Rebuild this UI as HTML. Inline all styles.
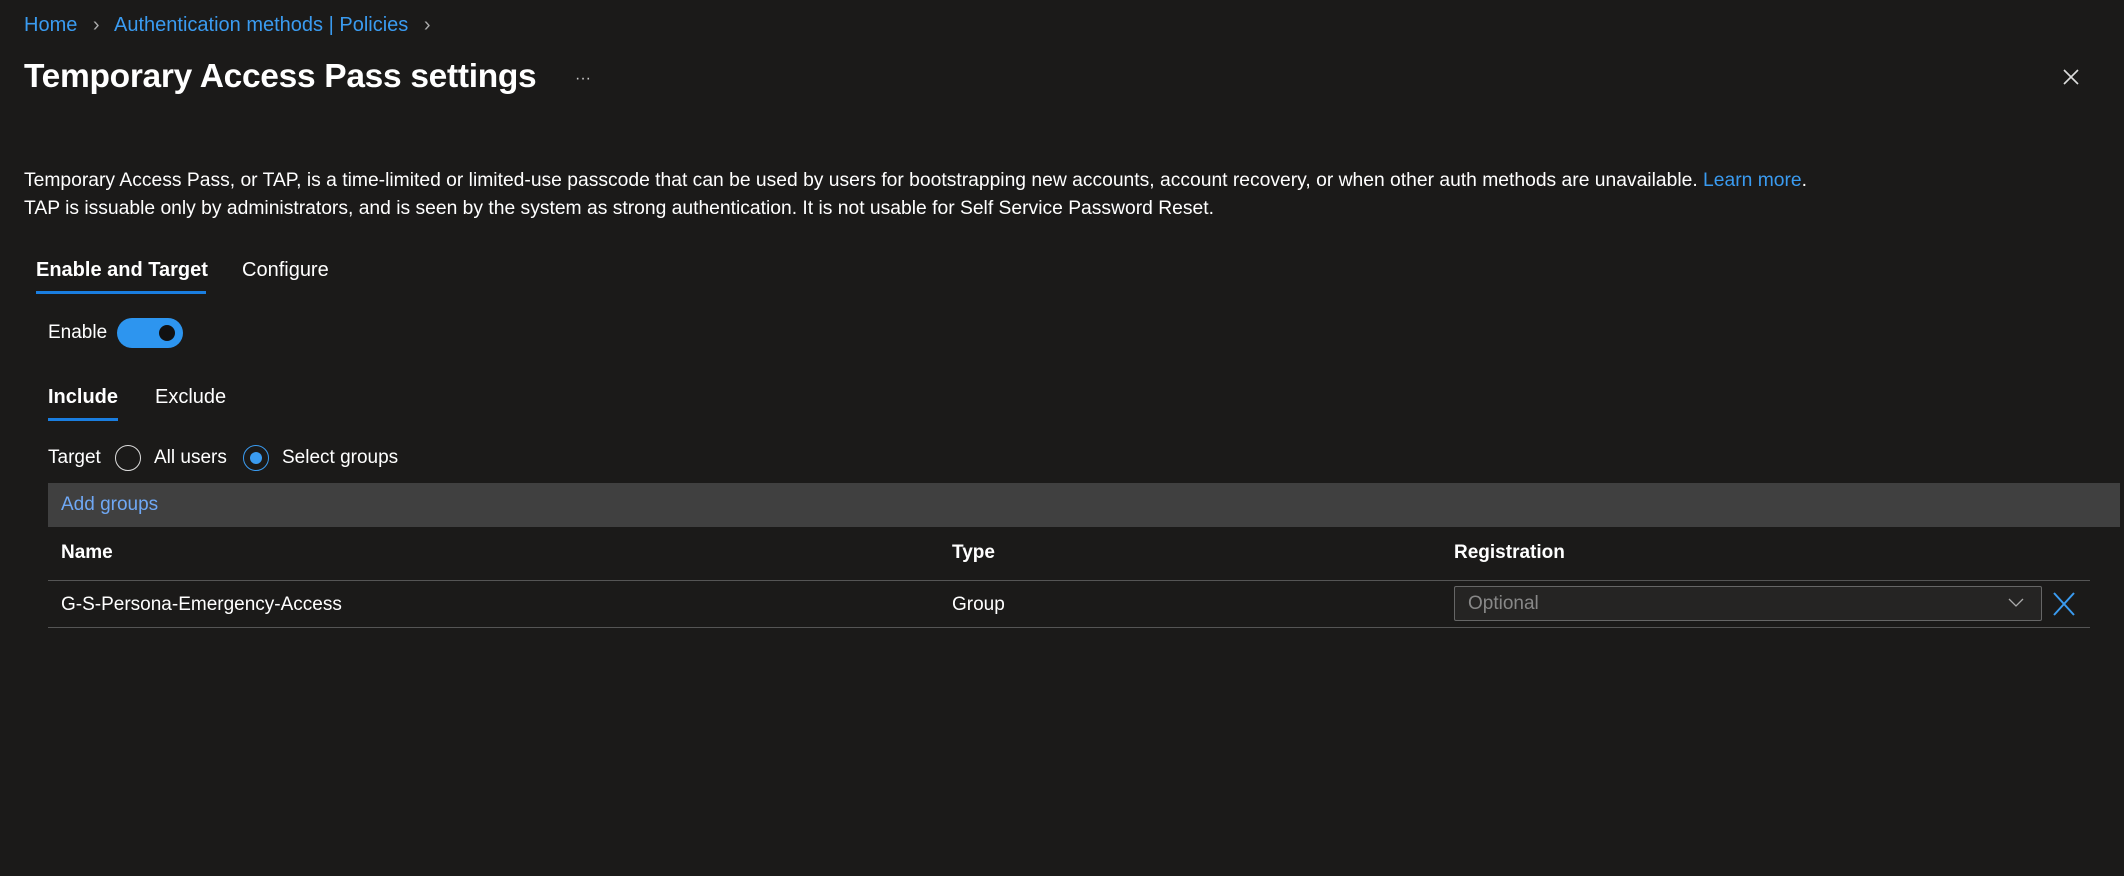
<!DOCTYPE html>
<html><head><meta charset="utf-8"><style>
*{margin:0;padding:0;box-sizing:border-box}
body{width:2124px;height:876px;background:#1b1a19;color:#fff;font-family:"Liberation Sans",sans-serif;position:relative;overflow:hidden;font-size:19px}
.a{position:absolute;white-space:nowrap}
.blue{color:#3a9bf0}
</style></head><body>
<div class="a blue" style="left:24px;top:14px;font-size:20px">Home <span style="color:#aaa;margin:0 10px">&#x203A;</span> Authentication methods | Policies <span style="color:#aaa;margin-left:10px">&#x203A;</span></div>
<div class="a" style="left:24px;top:58px;font-size:33.5px;font-weight:bold;letter-spacing:-0.3px">Temporary Access Pass settings</div>
<div class="a" style="left:575px;top:70px;font-size:16px;color:#ccc">···</div>
<svg class="a" style="left:2063px;top:69px" width="16" height="16"><path d="M1 1L15 15M15 1L1 15" stroke="#ddd" stroke-width="1.6"/></svg>
<div class="a" style="left:24px;top:167px;font-size:19.3px;line-height:28px">Temporary Access Pass, or TAP, is a time-limited or limited-use passcode that can be used by users for bootstrapping new accounts, account recovery, or when other auth methods are unavailable. <span class="blue">Learn more</span>.<br>TAP is issuable only by administrators, and is seen by the system as strong authentication. It is not usable for Self Service Password Reset.</div>
<div class="a" style="left:36px;top:259px;font-size:20px;font-weight:bold">Enable and Target</div>
<div class="a" style="left:36px;top:291px;width:170px;height:3px;background:#1a7ee0"></div>
<div class="a" style="left:242px;top:259px;font-size:20px">Configure</div>
<div class="a" style="left:48px;top:322px;font-size:19px">Enable</div>
<div class="a" style="left:117px;top:318px;width:66px;height:30px;border-radius:15px;background:#2d95ef"></div>
<div class="a" style="left:159px;top:325px;width:16px;height:16px;border-radius:50%;background:#111"></div>
<div class="a" style="left:48px;top:386px;font-size:20px;font-weight:bold">Include</div>
<div class="a" style="left:48px;top:418px;width:70px;height:3px;background:#1a7ee0"></div>
<div class="a" style="left:155px;top:386px;font-size:20px">Exclude</div>
<div class="a" style="left:48px;top:447px;font-size:19px">Target</div>
<div class="a" style="left:115px;top:445px;width:26px;height:26px;border-radius:50%;border:1.5px solid #ddd"></div>
<div class="a" style="left:154px;top:447px;font-size:19px">All users</div>
<div class="a" style="left:243px;top:445px;width:26px;height:26px;border-radius:50%;border:1.5px solid #3a9bf0"></div>
<div class="a" style="left:250px;top:452px;width:12px;height:12px;border-radius:50%;background:#3a9bf0"></div>
<div class="a" style="left:282px;top:447px;font-size:19px">Select groups</div>
<div class="a" style="left:48px;top:483px;width:2072px;height:44px;background:#404040"></div>
<div class="a" style="left:61px;top:494px;font-size:19px;color:#6fa8f5">Add groups</div>
<div class="a" style="left:61px;top:542px;font-size:19px;font-weight:bold">Name</div>
<div class="a" style="left:952px;top:542px;font-size:19px;font-weight:bold">Type</div>
<div class="a" style="left:1454px;top:542px;font-size:19px;font-weight:bold">Registration</div>
<div class="a" style="left:48px;top:580px;width:2042px;height:1px;background:#555"></div>
<div class="a" style="left:61px;top:594px;font-size:19px">G-S-Persona-Emergency-Access</div>
<div class="a" style="left:952px;top:594px;font-size:19px">Group</div>
<div class="a" style="left:1454px;top:586px;width:588px;height:35px;border:1px solid #666;border-radius:2px;background:#252423"></div>
<div class="a" style="left:1468px;top:593px;font-size:19px;color:#888">Optional</div>
<svg class="a" style="left:2008px;top:598px" width="16" height="10"><path d="M1 1L8 8L15 1" stroke="#aaa" stroke-width="1.3" fill="none"/></svg>
<svg class="a" style="left:2053px;top:592px" width="22" height="24"><path d="M1 1L21 23M21 1L1 23" stroke="#3a9bf0" stroke-width="2"/></svg>
<div class="a" style="left:48px;top:627px;width:2042px;height:1px;background:#555"></div>
</body></html>
